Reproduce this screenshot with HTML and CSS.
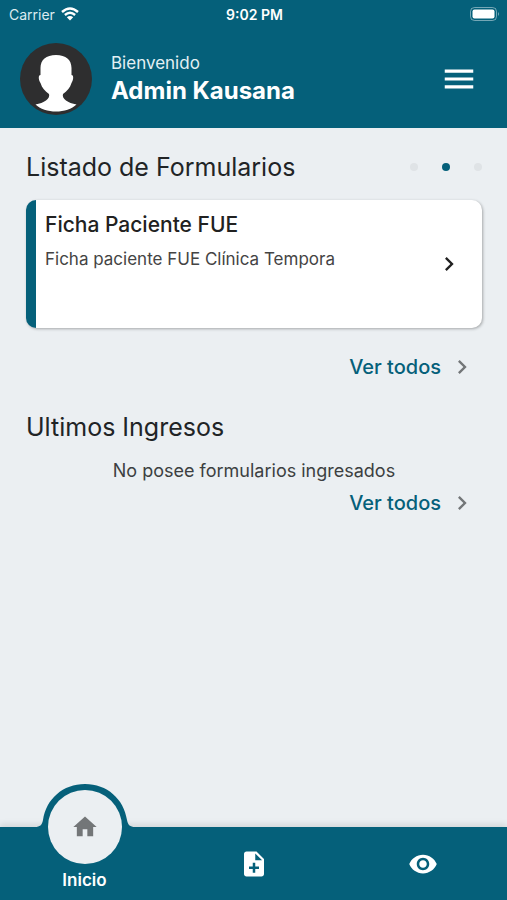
FILE: index.html
```html
<!DOCTYPE html>
<html lang="es">
<head>
    <meta charset="UTF-8">
    <meta name="viewport" content="width=device-width, initial-scale=1.0">
    <title>Inicio</title>
    <link rel="stylesheet" href="styles.css">
</head>
<body>
    <header class="header">
        <div class="status-bar">
            <div class="status-carrier">
                <span>Carrier</span>
                <svg class="wifi" viewBox="0 0 18 14" aria-hidden="true">
                    <path d="M1 5Q9-2.200 17 5M3.900 8Q9 3.500 14.100 8" fill="none" stroke="currentColor" stroke-width="2.400"/>
                    <path d="M9 13.500L5.800 10.300Q9 7.700 12.200 10.300z" fill="currentColor"/>
                </svg>
            </div>
            <span class="status-time">9:02 PM</span>
            <svg class="battery" viewBox="0 0 30 14" aria-hidden="true">
                <rect x="0.500" y="0.500" width="26" height="13" rx="4" fill="none" stroke="#fff" stroke-opacity="0.450"/>
                <rect x="2.500" y="2.500" width="22" height="9" rx="2" fill="#fff"/>
                <path d="M28 5q2 2 0 4z" fill="#fff" fill-opacity="0.450"/>
            </svg>
        </div>

        <div class="user-bar">
            <svg class="avatar" viewBox="0 0 72 72" role="img" aria-label="Foto de perfil">
                <circle cx="36" cy="36" r="36" fill="#2e2e2f"/>
                <path d="M36 12C26 12 20.500 17 20.500 25V32C18 32 18.500 37 20.500 40C22 45 25 48 29 51C30.500 56 24 60 15.500 61.500C20 66 28 68.500 36 68.500S52 66 56.500 61.500C48 60 41.500 56 43 51C47 48 50 45 51.500 40C53.500 37 54 32 51.500 32V25C51.500 17 46 12 36 12z" fill="#fff"/>
            </svg>
            <div class="user-info">
                <span class="greeting">Bienvenido</span>
                <span class="user-name">Admin Kausana</span>
            </div>
            <button type="button" class="menu-button" aria-label="Menú">
                <svg viewBox="0 0 24 24"><path d="M3 18h18v-2H3zM3 13h18v-2H3zM3 8h18V6H3z"/></svg>
            </button>
        </div>
    </header>

    <main class="content">
        <section class="forms">
            <div class="section-head">
                <h2>Listado de Formularios</h2>
                <div class="dots">
                    <span class="dot"></span>
                    <span class="dot active"></span>
                    <span class="dot"></span>
                </div>
            </div>
            <a href="#" class="card">
                <div class="card-text">
                    <h3>Ficha Paciente FUE</h3>
                    <p>Ficha paciente FUE Clínica Tempora</p>
                </div>
                <svg class="chevron" viewBox="0 0 24 24"><path d="M10 6L8.590 7.410 13.170 12l-4.580 4.590L10 18l6-6z"/></svg>
            </a>
            <a href="#" class="see-all">
                Ver todos
                <svg class="chevron" viewBox="0 0 24 24"><path d="M10 6L8.590 7.410 13.170 12l-4.580 4.590L10 18l6-6z"/></svg>
            </a>
        </section>

        <section class="entries">
            <h2>Ultimos Ingresos</h2>
            <p class="empty">No posee formularios ingresados</p>
            <a href="#" class="see-all">
                Ver todos
                <svg class="chevron" viewBox="0 0 24 24"><path d="M10 6L8.590 7.410 13.170 12l-4.580 4.590L10 18l6-6z"/></svg>
            </a>
        </section>
    </main>

    <nav class="tab-bar">
        <button type="button" class="tab selected">
            <svg class="bump" viewBox="0 0 100 52" aria-hidden="true">
                <path d="M0 52V43C5 43 7 41 8 36C11 15 28 0 50 0S89 15 92 36C93 41 95 43 100 43V52z"/>
            </svg>
            <span class="tab-circle">
                <svg viewBox="0 0 24 24"><path d="M10 20v-6h4v6h5v-8h3L12 3 2 12h3v8z"/></svg>
            </span>
            <span class="tab-label">Inicio</span>
        </button>
        <button type="button" class="tab" aria-label="Nuevo formulario">
            <svg class="tab-icon" viewBox="0 0 24 24"><path d="M14 2H6c-1.100 0-1.990.900-1.990 2L4 20c0 1.100.890 2 1.990 2H18c1.100 0 2-.900 2-2V8l-6-6zm2 14h-3v3h-2v-3H8v-2h3v-3h2v3h3v2zm-3-7V3.500L18.500 9H13z"/></svg>
        </button>
        <button type="button" class="tab" aria-label="Ver formularios">
            <svg class="tab-icon" viewBox="0 0 24 24"><path d="M12 4.500C7 4.500 2.730 7.610 1 12c1.730 4.390 6 7.500 11 7.500s9.270-3.110 11-7.500c-1.730-4.390-6-7.500-11-7.500zM12 17c-2.760 0-5-2.240-5-5s2.240-5 5-5 5 2.240 5 5-2.240 5-5 5zm0-8c-1.660 0-3 1.340-3 3s1.340 3 3 3 3-1.340 3-3-1.340-3-3-3z"/></svg>
        </button>
    </nav>
</body>
</html>
```
FILE: styles.css
```css
* {
    box-sizing: border-box;
}

body {
    margin: 0;
    min-height: 100vh;
    display: flex;
    flex-direction: column;
    background-color: #ebeff2;
    color: #212426;
    font-family: Inter, "Liberation Sans", sans-serif;
}

h2, h3, p {
    margin: 0;
}

button {
    padding: 0;
    border: none;
    background: none;
    color: inherit;
    font: inherit;
    cursor: pointer;
}

a {
    text-decoration: none;
}

svg {
    display: block;
    fill: currentColor;
}

/* Header */
.header {
    background-color: #05607a;
    color: #fff;
}

.status-bar {
    display: grid;
    grid-template-columns: 1fr auto 1fr;
    align-items: center;
    height: 28px;
    padding: 0 7px 0 9px;
    font-size: 14px;
}

.status-carrier {
    display: flex;
    align-items: center;
    gap: 6px;
    color: #dcebf0;
}

.wifi {
    width: 18px;
    height: 14px;
    color: #fff;
}

.status-time {
    font-weight: 600;
}

.battery {
    width: 30px;
    height: 14px;
    justify-self: end;
}

.user-bar {
    display: flex;
    align-items: center;
    gap: 19px;
    height: 100px;
    padding: 2px 29px 0 20px;
}

.avatar {
    width: 72px;
    height: 72px;
}

.user-info {
    display: flex;
    flex: 1;
    flex-direction: column;
}

.greeting {
    font-size: 17px;
    line-height: 24px;
    color: #e3f0f4;
}

.user-name {
    font-size: 24px;
    font-weight: 700;
    line-height: 32px;
}

.menu-button svg {
    width: 38px;
    height: 38px;
}

/* Content */
.content {
    flex: 1;
    padding: 22px 25px 0 26px;
}

h2 {
    font-size: 25px;
    font-weight: 400;
    line-height: 34px;
}

.section-head {
    display: flex;
    align-items: center;
    justify-content: space-between;
}

.dots {
    display: flex;
    gap: 24px;
}

.dot {
    width: 8px;
    height: 8px;
    border-radius: 50%;
    background-color: #dfe3e6;
}

.dot.active {
    background-color: #05607a;
}

.card {
    display: flex;
    align-items: center;
    height: 128px;
    margin-top: 16px;
    padding: 0 19px 0 9px;
    border-left: 10px solid #05607a;
    border-radius: 10px;
    background: #fff;
    box-shadow: 1px 1px 3px rgba(0, 0, 0, 0.3);
    color: #212121;
}

.card-text {
    flex: 1;
    align-self: flex-start;
    padding-top: 10px;
}

.card h3 {
    font-size: 21px;
    font-weight: 500;
    line-height: 30px;
}

.card p {
    margin-top: 7px;
    font-size: 17px;
    line-height: 24px;
    color: #444;
}

.chevron {
    width: 28px;
    height: 28px;
}

.see-all {
    display: flex;
    align-items: center;
    gap: 7px;
    width: fit-content;
    height: 32px;
    margin-left: auto;
    padding-right: 6px;
    color: #05607a;
    font-size: 20px;
    font-weight: 500;
}

.see-all .chevron {
    color: #737678;
}

.forms .see-all {
    margin-top: 23px;
}

.entries {
    padding-top: 27px;
}

.empty {
    margin-top: 15px;
    font-size: 18px;
    line-height: 24px;
    text-align: center;
    color: #3c3f41;
}

.entries .see-all {
    margin-top: 4px;
}

/* Bottom tabs */
.tab-bar {
    display: flex;
    height: 73px;
    background-color: #05607a;
    box-shadow: 0 -3px 6px rgba(0, 0, 0, 0.1);
    color: #fff;
}

.tab {
    position: relative;
    display: flex;
    flex: 1;
    flex-direction: column;
    align-items: center;
    justify-content: center;
}

.tab.selected {
    justify-content: flex-end;
    padding-bottom: 8px;
}

/* raised part of the bar behind the selected tab */
.bump {
    position: absolute;
    top: -43px;
    left: 50%;
    width: 100px;
    height: 52px;
    margin-left: -50px;
    fill: #05607a;
}

.tab-circle {
    position: relative;
    display: flex;
    flex-shrink: 0;
    align-items: center;
    justify-content: center;
    width: 74px;
    height: 74px;
    border-radius: 50%;
    background-color: #ebeff2;
    color: #737678;
}

.tab-circle svg {
    width: 28px;
    height: 28px;
}

.tab-label {
    margin-top: 4px;
    font-size: 17px;
    font-weight: 600;
    line-height: 24px;
}

.tab-icon {
    width: 30px;
    height: 30px;
}
```
